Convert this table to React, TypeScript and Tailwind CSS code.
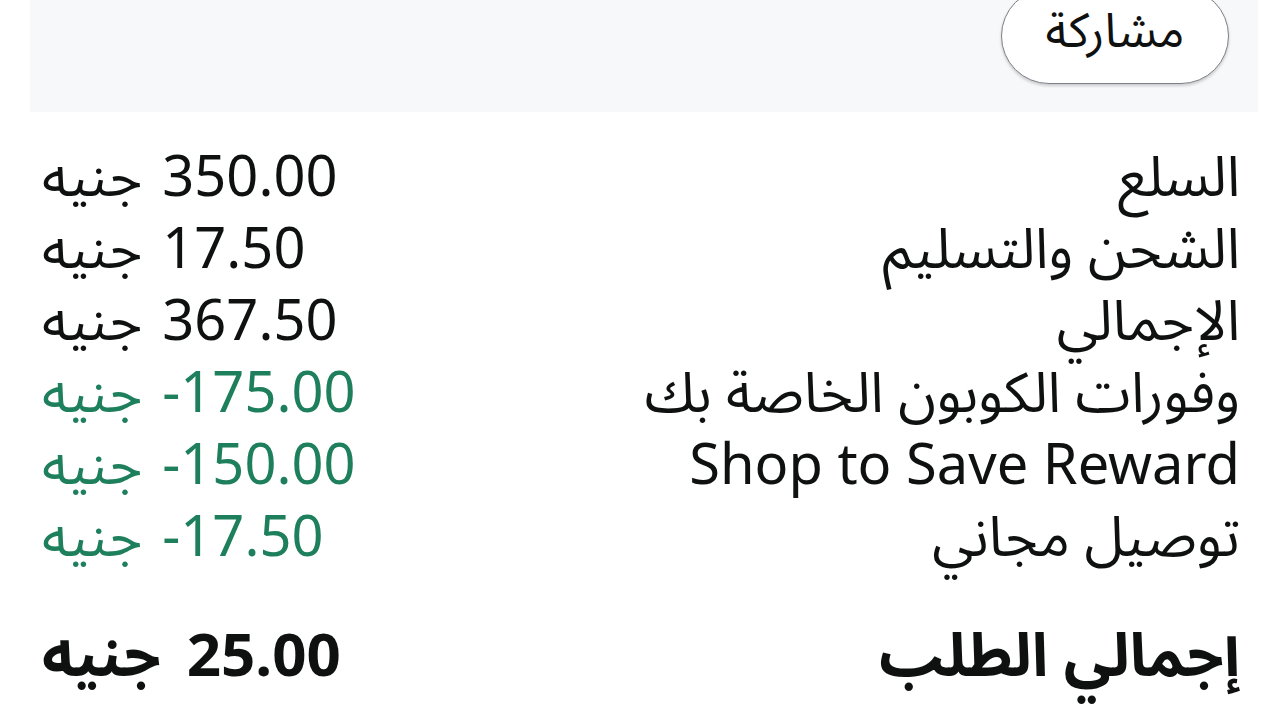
import React from "react";

const rows: { label: string; value: string; green?: boolean }[] = [
  { label: "السلع", value: "350.00" },
  { label: "الشحن والتسليم", value: "17.50" },
  { label: "الإجمالي", value: "367.50" },
  { label: "وفورات الكوبون الخاصة بك", value: "-175.00", green: true },
  { label: "Shop to Save Reward", value: "-150.00", green: true },
  { label: "توصيل مجاني", value: "-17.50", green: true },
];

function Amount({ value, green, bold }: { value: string; green?: boolean; bold?: boolean }) {
  return (
    <div
      dir="ltr"
      className={
        "flex items-center " +
        (bold ? "gap-[26px] font-bold " : "gap-[20px] ") +
        (green ? "text-[#1e7f5c]" : "text-[#0f1111]")
      }
    >
      <span>جنيه</span>
      <span>{value}</span>
    </div>
  );
}

export default function App() {
  return (
    <div
      className="w-[1280px] h-[720px] overflow-hidden bg-white text-[#0f1111]"
      style={{ fontFamily: '"Noto Sans", "Noto Sans Arabic", sans-serif' }}
    >
      <div className="ml-[30px] mr-[22px] h-[112px] bg-[#f7f8fa] flex justify-end items-start pr-[29px]">
        <button className="mt-[-12px] h-[96px] w-[228px] rounded-full border-[1.5px] border-[#7d8087] bg-white shadow-[0_2px_3px_rgba(0,0,0,0.18)] flex items-center justify-center pb-[14px] text-[48px] leading-[48px] text-[#0f1111]">
          <span className="block leading-[48px]">مشاركة</span>
        </button>
      </div>
      <div className="pl-[42px] pr-[40px] pt-[26px] text-[56px] leading-[72px]">
        {rows.map((r) => (
          <div key={r.label} className="flex justify-between items-center h-[72px]">
            <Amount value={r.value} green={r.green} />
            <div dir="rtl" className="text-right">{r.label}</div>
          </div>
        ))}
        <div className="flex justify-between items-center h-[72px] mt-[47px] font-bold text-[60px]">
          <Amount value="25.00" bold />
          <div dir="rtl" className="text-right">إجمالي الطلب</div>
        </div>
      </div>
    </div>
  );
}
